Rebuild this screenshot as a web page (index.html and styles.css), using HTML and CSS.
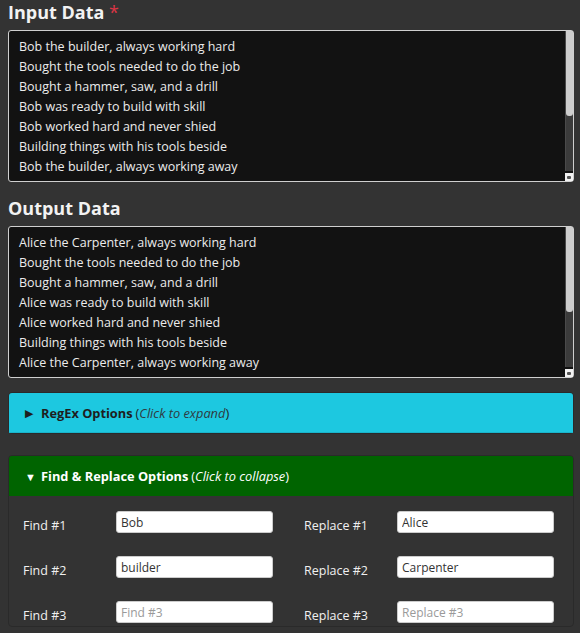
FILE: index.html
```html
<!DOCTYPE html>
<html>
<head>
<meta charset="utf-8">
<link rel="stylesheet" href="styles.css">
</head>
<body>
<div class="page">
  <label class="field-title">Input Data <span class="req">*</span></label>
  <div class="ta-wrap">
    <textarea class="data" spellcheck="false">Bob the builder, always working hard
Bought the tools needed to do the job
Bought a hammer, saw, and a drill
Bob was ready to build with skill
Bob worked hard and never shied
Building things with his tools beside
Bob the builder, always working away
Fixing and making things every day
Bob the builder, never gave up
Building and building, he filled his cup
Bob the builder, the best in town
Always working, never let down</textarea>
    <div class="sb"><div class="sb-thumb"></div></div>
    <div class="grip"><span></span></div>
  </div>

  <label class="field-title">Output Data</label>
  <div class="ta-wrap">
    <textarea class="data" spellcheck="false">Alice the Carpenter, always working hard
Bought the tools needed to do the job
Bought a hammer, saw, and a drill
Alice was ready to build with skill
Alice worked hard and never shied
Building things with his tools beside
Alice the Carpenter, always working away
Fixing and making things every day
Alice the Carpenter, never gave up
Building and building, he filled his cup
Alice the Carpenter, the best in town
Always working, never let down</textarea>
    <div class="sb"><div class="sb-thumb"></div></div>
    <div class="grip"><span></span></div>
  </div>

  <div class="card card-info">
    <div class="card-header"><span class="tri">&#9654;</span><b>RegEx Options</b> (<i>Click to expand</i>)</div>
  </div>

  <div class="card card-success">
    <div class="card-header"><span class="tri">&#9660;</span><b>Find &amp; Replace Options</b> (<i>Click to collapse</i>)</div>
    <div class="card-body">
      <div class="row">
        <div class="pair"><span class="lbl">Find #1</span><input class="inp" value="Bob" placeholder="Find #1"></div>
        <div class="pair"><span class="lbl">Replace #1</span><input class="inp" value="Alice" placeholder="Replace #1"></div>
      </div>
      <div class="row">
        <div class="pair"><span class="lbl">Find #2</span><input class="inp" value="builder" placeholder="Find #2"></div>
        <div class="pair"><span class="lbl">Replace #2</span><input class="inp" value="Carpenter" placeholder="Replace #2"></div>
      </div>
      <div class="row">
        <div class="pair"><span class="lbl">Find #3</span><input class="inp" value="" placeholder="Find #3"></div>
        <div class="pair"><span class="lbl">Replace #3</span><input class="inp" value="" placeholder="Replace #3"></div>
      </div>
    </div>
  </div>
</div>
</body>
</html>
```

FILE: styles.css
```css
html, body {
  margin: 0;
  padding: 0;
  background: #333333;
}
body {
  font-family: "Open Sans", "Noto Sans", sans-serif;
  font-size: 13px;
  color: #eeeeee;
}
.page {
  padding: 0 6px 0 8px;
  display: flex;
  flex-direction: column;
}
.field-title {
  display: block;
  font-size: 18px;
  line-height: 24px;
  font-weight: 700;
  color: #f2f2f2;
  margin: 0 0 6px 0;
}
.req {
  color: #dc3545;
  font-weight: 400;
}
.ta-wrap {
  position: relative;
  width: 566px;
  height: 152px;
  margin: 0 0 14px 0;
}
.data {
  display: block;
  box-sizing: border-box;
  width: 566px;
  height: 152px;
  margin: 0;
  padding: 6px 18px 6px 10px;
  background: #121212;
  color: #ececec;
  border: 1px solid #cfcfcf;
  border-radius: 3px;
  font-family: "Open Sans", "Noto Sans", sans-serif;
  font-size: 12.5px;
  line-height: 20px;
  resize: none;
  overflow: hidden;
  outline: none;
}
.sb {
  position: absolute;
  right: 1px;
  top: 1px;
  width: 8px;
  height: 140px;
  background: #3b3b3b;
  border-left: 1px solid #4a4a4a;
  box-sizing: border-box;
}
.sb-thumb {
  height: 85px;
  background: #cdcdcd;
  border-radius: 0 0 3px 3px;
}
.grip {
  position: absolute;
  right: 1px;
  bottom: 1px;
  width: 8px;
  height: 8px;
  background: #f2f2f2;
  display: flex;
  align-items: center;
  justify-content: center;
}
.grip span {
  width: 4px;
  height: 3px;
  background: #555555;
  border-radius: 1px;
}
.card {
  box-sizing: border-box;
  width: 566px;
  border: 1px solid #2a2a2a;
  border-radius: 4px;
  margin-bottom: 21px;
}
.card-header {
  height: 40px;
  box-sizing: border-box;
  padding: 0 0 0 16px;
  display: flex;
  align-items: center;
  font-size: 12.8px;
  border-radius: 3px 3px 0 0;
}
.card-header b {
  font-weight: 700;
  margin-right: 3px;
}
.tri {
  font-size: 11px;
  margin-right: 7px;
  display: inline-block;
  width: 9px;
}
.card-info .card-header {
  background: #1dc8e0;
  color: #1e1e1e;
  border-bottom: 1px solid #1ab4cb;
}
.card-info .card-header i {
  color: #2f3a40;
}
.card-success .card-header {
  background: #006400;
  color: #ffffff;
}
.card-body {
  padding: 15px 14px 0 14px;
  display: flex;
  flex-direction: column;
  gap: 20px;
}
.row {
  display: flex;
  gap: 31px;
}
.pair {
  display: flex;
  width: 250px;
  align-items: flex-start;
}
.lbl {
  width: 93px;
  flex: none;
  margin-top: 5px;
  line-height: 20px;
  font-size: 12.5px;
  color: #f0f0f0;
}
.inp {
  box-sizing: border-box;
  width: 157px;
  height: 22px;
  border: 1px solid #cccccc;
  border-radius: 3px;
  background: #ffffff;
  color: #333333;
  padding: 0 4px;
  font-family: "Open Sans", "Noto Sans", sans-serif;
  font-size: 12px;
  outline: none;
}
.inp::placeholder {
  color: #9a9a9a;
}
```
